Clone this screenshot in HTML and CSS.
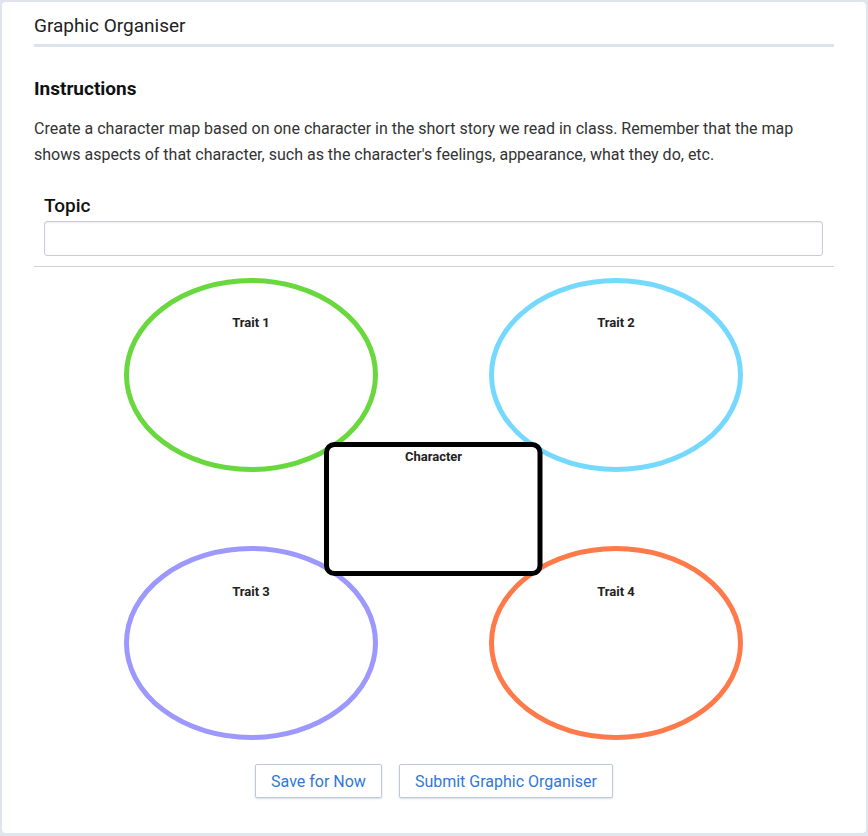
FILE: index.html
```html
<!DOCTYPE html>
<html lang="en">
<head>
<meta charset="utf-8">
<title>Graphic Organiser</title>
<link rel="stylesheet" href="styles.css">
</head>
<body>
<div class="card">
  <div class="card-title">Graphic Organiser</div>
  <h2 class="section-title">Instructions</h2>
  <p class="instructions">Create a character map based on one character in the short story we read in class. Remember that the map shows aspects of that character, such as the character's feelings, appearance, what they do, etc.</p>
  <div class="topic">
    <label class="topic-label" for="topic">Topic</label>
    <input class="topic-input" id="topic" type="text">
  </div>
  <div class="divider"></div>
  <svg class="diagram" width="800" height="483" viewBox="0 0 800 483">
    <ellipse cx="217" cy="108" rx="124.5" ry="94.5" fill="none" stroke="#69d83e" stroke-width="5"/>
    <ellipse cx="582" cy="108" rx="124.5" ry="94.5" fill="none" stroke="#74d9fd" stroke-width="5"/>
    <ellipse cx="217" cy="376" rx="124.5" ry="94.5" fill="none" stroke="#9c98fd" stroke-width="5"/>
    <ellipse cx="582" cy="376" rx="124.5" ry="94.5" fill="none" stroke="#ff7a4a" stroke-width="5"/>
    <rect x="292.5" y="177.5" width="213.5" height="129" rx="8" ry="8" fill="#fff" stroke="#000" stroke-width="5"/>
    <text class="node-label" x="217" y="60" text-anchor="middle">Trait 1</text>
    <text class="node-label" x="582" y="60" text-anchor="middle">Trait 2</text>
    <text class="node-label" x="217" y="329" text-anchor="middle">Trait 3</text>
    <text class="node-label" x="582" y="329" text-anchor="middle">Trait 4</text>
    <text class="node-label" x="399.5" y="194" text-anchor="middle">Character</text>
  </svg>
  <div class="actions">
    <button class="btn" type="button">Save for Now</button>
    <button class="btn" type="button">Submit Graphic Organiser</button>
  </div>
</div>
</body>
</html>
```
FILE: styles.css
```css
html, body {
  margin: 0;
  padding: 0;
}
body {
  background: #dfe4ee;
  font-family: Roboto, "Liberation Sans", Arial, sans-serif;
  color: #333;
  padding: 2px 2px 0 2px;
}
.card {
  background: #fff;
  border-radius: 4px;
  width: 864px;
  height: 831px;
  box-sizing: border-box;
  padding: 12px 32px 0 32px;
  display: flex;
  flex-direction: column;
}
.card-title {
  font-size: 19px;
  line-height: 24px;
  color: #222;
  padding-bottom: 6px;
  border-bottom: 3px solid #dde3ec;
}
.section-title {
  margin: 30px 0 0 0;
  font-size: 19px;
  line-height: 24px;
  font-weight: 700;
  color: #111;
}
.instructions {
  margin: 15px 0 0 0;
  font-size: 16px;
  line-height: 26px;
  color: #333;
}
.topic {
  margin: 26px 11px 0 10px;
  display: flex;
  flex-direction: column;
}
.topic-label {
  font-size: 19px;
  line-height: 24px;
  color: #111;
  font-weight: 500;
}
.topic-input {
  margin-top: 3px;
  height: 35px;
  box-sizing: border-box;
  border: 1px solid #c9ccd6;
  border-radius: 3px;
  box-shadow: inset 0 1px 2px rgba(0,0,0,0.08);
  font: inherit;
  padding: 0 8px;
  background: #fff;
}
.divider {
  margin-top: 10px;
  height: 1px;
  background: #cfd1d8;
}
.diagram {
  display: block;
  width: 800px;
  height: 483px;
}
.node-label {
  font-family: Roboto, "Liberation Sans", Arial, sans-serif;
  font-size: 13px;
  font-weight: 700;
  fill: #222;
}
.actions {
  margin-top: 14px;
  display: flex;
  justify-content: center;
  gap: 17px;
}
.btn {
  height: 34px;
  box-sizing: border-box;
  padding: 0 15px;
  background: #fff;
  border: 1px solid #bfc9db;
  border-radius: 2px;
  box-shadow: 0 1px 2px rgba(60,80,120,0.2);
  color: #2f78d9;
  font-family: Roboto, "Liberation Sans", Arial, sans-serif;
  font-size: 16px;
  cursor: pointer;
}
```
